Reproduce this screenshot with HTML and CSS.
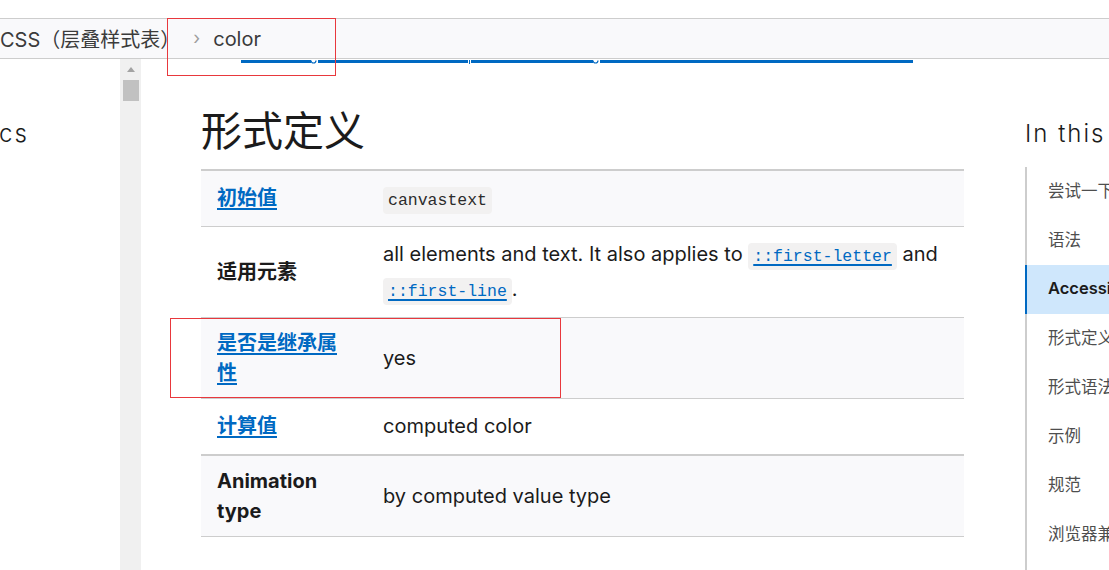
FILE: index.html
```html
<!DOCTYPE html>
<html lang="zh-CN">
<head>
<meta charset="utf-8">
<title>color - CSS（层叠样式表）</title>
<link rel="stylesheet" href="styles.css">
</head>
<body>
<div class="topgap"></div>
<nav class="breadcrumbs">
  <span class="crumb">CSS（层叠样式表）</span>
  <span class="sep">›</span>
  <span class="crumb current">color</span>
</nav>
<div class="page">
  <aside class="sidebar">
    <div class="side-title">cs</div>
  </aside>
  <div class="scrollbar">
    <span class="arrow-up"></span>
    <span class="thumb"></span>
  </div>
  <main class="main">
    <svg class="clipped-link" width="672" height="4" viewBox="0 0 672 4">
      <rect x="0" y="0" width="70" height="3" fill="#0069c2"/>
      <path d="M70 0.5 a2.5 2.5 0 0 0 5 0" fill="none" stroke="#0069c2" stroke-width="1.2"/>
      <rect x="77" y="0" width="150" height="3" fill="#0069c2"/>
      <rect x="228" y="0" width="1" height="4" fill="#0069c2"/>
      <rect x="230" y="0" width="122" height="3" fill="#0069c2"/>
      <path d="M352 0.5 a2.5 2.5 0 0 0 5 0" fill="none" stroke="#0069c2" stroke-width="1.2"/>
      <rect x="359" y="0" width="313" height="3" fill="#0069c2"/>
    </svg>
    <h1 class="title">形式定义</h1>
    <table class="props">
      <tbody>
        <tr class="alt single">
          <th><a href="#">初始值</a></th>
          <td><code>canvastext</code></td>
        </tr>
        <tr class="double-code">
          <th>适用元素</th>
          <td>all elements and text. It also applies to <a href="#"><code>::first-letter</code></a> and <a href="#"><code>::first-line</code></a>.</td>
        </tr>
        <tr class="alt">
          <th><a href="#">是否是继承属性</a></th>
          <td>yes</td>
        </tr>
        <tr class="single thick">
          <th><a href="#">计算值</a></th>
          <td>computed color</td>
        </tr>
        <tr class="alt">
          <th>Animation type</th>
          <td>by computed value type</td>
        </tr>
      </tbody>
    </table>
  </main>
  <aside class="toc">
    <h2 class="toc-title">In this</h2>
    <ul class="toc-list">
      <li><a href="#">尝试一下</a></li>
      <li><a href="#">语法</a></li>
      <li class="active"><a href="#">Accessibility</a></li>
      <li><a href="#">形式定义</a></li>
      <li><a href="#">形式语法</a></li>
      <li><a href="#">示例</a></li>
      <li><a href="#">规范</a></li>
      <li><a href="#">浏览器兼容性</a></li>
    </ul>
  </aside>
</div>
<div class="annot annot-1"></div>
<div class="annot annot-2"></div>
</body>
</html>
```

FILE: styles.css
```css
* { box-sizing: border-box; }
html, body {
  margin: 0;
  padding: 0;
  width: 1109px;
  height: 570px;
  overflow: hidden;
  background: #ffffff;
  color: #1b1b1b;
  font-family: Inter, "Noto Sans CJK SC", sans-serif;
}
.topgap { height: 18px; }
.breadcrumbs {
  height: 41px;
  border-top: 1px solid #cdcdcd;
  border-bottom: 1px solid #cdcdcd;
  background: #f9f9fb;
  display: flex;
  align-items: center;
  font-size: 20px;
  color: #3b3b3b;
  white-space: nowrap;
}
.crumb { display: block; }
.sep {
  color: #9e9e9e;
  font-size: 18px;
  margin-left: 13px;
  margin-right: 13px;
  position: relative;
  top: -1px;
}
.current { font-size: 20px; }

.page {
  display: grid;
  grid-template-columns: 120px 21px 884px 1fr;
  height: 511px;
}
.sidebar { overflow: hidden; }
.side-title {
  margin-top: 60px;
  margin-left: -1px;
  font-size: 24px;
  font-weight: 300;
  letter-spacing: 2px;
  line-height: 30px;
  color: #1b1b1b;
}
.scrollbar {
  background: #f0f0f0;
  display: flex;
  flex-direction: column;
  align-items: center;
  padding-top: 8px;
}
.arrow-up {
  width: 0;
  height: 0;
  border-left: 4.5px solid transparent;
  border-right: 4.5px solid transparent;
  border-bottom: 5px solid #a3a3a3;
}
.thumb {
  margin-top: 8px;
  width: 16px;
  height: 21px;
  background: #c1c1c1;
}

.main { padding-left: 60px; }
.clipped-link {
  display: block;
  margin-top: 1px;
  margin-left: 40px;
}
.title {
  margin: 38px 0 0 0;
  font-size: 41px;
  font-weight: 400;
  line-height: 58px;
  height: 67px;
  color: #1b1b1b;
  font-family: Inter, "Noto Sans CJK SC", sans-serif;
}
.props {
  width: 763px;
  border-collapse: separate;
  border-spacing: 0;
  border-top: 2px solid #cdcdcd;
  font-size: 20px;
  line-height: 30px;
}
.props th, .props td {
  border-bottom: 1px solid #cdcdcd;
  padding: 10px 16px;
  text-align: left;
  vertical-align: middle;
}
.props th {
  width: 166px;
  font-weight: 700;
  color: #1b1b1b;
}
.props tr.alt th, .props tr.alt td { background: #f9f9fb; }
.props tr.single th, .props tr.single td { padding-top: 12px; padding-bottom: 13px; }
.props tr.double-code td, .props tr.double-code th { line-height: 35px; }
.props tr.thick th, .props tr.thick td { border-bottom-width: 2px; }
.props a {
  color: #0069c2;
  text-decoration: underline;
  text-decoration-thickness: 2px;
  text-underline-offset: 3px;
}
.props code {
  font-family: "Liberation Mono", "DejaVu Sans Mono", monospace;
  font-size: 16.5px;
  line-height: 1;
  background: #f2f1f1;
  border-radius: 4px;
  padding: 4px 5px;
  color: #2b2b2b;
}
.props a code { color: #0069c2; }

.toc { overflow: hidden; white-space: nowrap; }
.toc-title {
  margin: 60px 0 0 0;
  font-size: 24px;
  font-weight: 300;
  letter-spacing: 2px;
  line-height: 30px;
  color: #1b1b1b;
}
.toc-list {
  list-style: none;
  margin: 18px 0 0 0;
  padding: 0;
  border-left: 2px solid #cdcdcd;
  height: 420px;
}
.toc-list li {
  height: 49px;
  display: flex;
  align-items: center;
  padding-left: 21px;
  padding-bottom: 3px;
  font-size: 16.5px;
  margin-left: -2px;
  border-left: 2px solid transparent;
}
.toc-list a { color: #4e4e4e; text-decoration: none; }
.toc-list li.active {
  background: #cfe7fc;
  border-left-color: #0069c2;
}
.toc-list li.active a { color: #1b1b1b; font-weight: 600; }

.annot {
  position: absolute;
  border: 1px solid #e8383d;
  pointer-events: none;
}
.annot-1 { left: 167px; top: 18px; width: 169px; height: 58px; }
.annot-2 { left: 170px; top: 318px; width: 391px; height: 80px; }
```
